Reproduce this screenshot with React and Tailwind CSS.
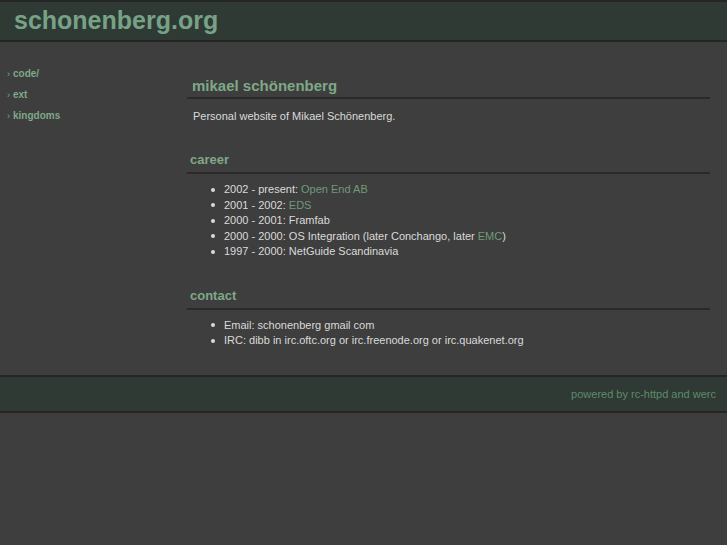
export default function App() {
  const font = { fontFamily: '"Liberation Sans", Arial, sans-serif' };
  return (
    <div className="min-h-screen bg-[#3e3e3e]" style={font}>
      <header className="h-[42px] border-y-2 border-[#252525] bg-[#2e3a33] pl-[14px] flex items-center">
        <span className="text-[25px] font-bold leading-none text-[#77a287] -mt-[2px]">schonenberg.org</span>
      </header>
      <div className="flex h-[333px]">
        <nav className="w-[187px] shrink-0 pt-[21px] pl-[7px]">
          {["code/", "ext", "kingdoms"].map((t) => (
            <div key={t} className="h-[21px] leading-[21px] text-[10px] font-bold text-[#7ea887]">
              <span className="text-[9px] font-normal mr-[3px] text-[#7ea887]">›</span>
              {t}
            </div>
          ))}
        </nav>
        <main className="flex-1 pr-[17px] pt-[35px] text-[11px] text-[#dadada]">
          <h1 className="pl-[5px] text-[15px] font-bold leading-[18px] text-[#7ea887] pb-[2px] border-b-2 border-[#2a2a2a]">
            mikael schönenberg
          </h1>
          <p className="pl-[6px] mt-[10px] leading-[15px]">Personal website of Mikael Schönenberg.</p>
          <h2 className="mt-[28px] pl-[3px] text-[13px] font-bold leading-[16px] text-[#7ea887] pb-[4px] border-b-2 border-[#2a2a2a]">
            career
          </h2>
          <ul className="mt-[8px] pl-[37px] leading-[15.5px]">
            {[
              ["2002 - present: ", <a key="a" className="text-[#6f9b78]">Open End AB</a>],
              ["2001 - 2002: ", <a key="a" className="text-[#6f9b78]">EDS</a>],
              ["2000 - 2001: Framfab"],
              ["2000 - 2000: OS Integration (later Conchango, later ", <a key="a" className="text-[#6f9b78]">EMC</a>, ")"],
              ["1997 - 2000: NetGuide Scandinavia"],
            ].map((parts, i) => (
              <li key={i} className="flex items-center">
                <span className="w-[4px] h-[4px] rounded-full bg-[#dadada] mr-[9px] -ml-[13px]"></span>
                <span>{parts}</span>
              </li>
            ))}
          </ul>
          <h2 className="mt-[28px] pl-[3px] text-[13px] font-bold leading-[16px] text-[#7ea887] pb-[4px] border-b-2 border-[#2a2a2a]">
            contact
          </h2>
          <ul className="mt-[8px] pl-[37px] leading-[15.5px]">
            {["Email: schonenberg gmail com", "IRC: dibb in irc.oftc.org or irc.freenode.org or irc.quakenet.org"].map((t) => (
              <li key={t} className="flex items-center">
                <span className="w-[4px] h-[4px] rounded-full bg-[#dadada] mr-[9px] -ml-[13px]"></span>
                <span>{t}</span>
              </li>
            ))}
          </ul>
        </main>
      </div>
      <footer className="h-[38px] border-y-2 border-[#252525] bg-[#2e3a33] flex items-center justify-end pr-[11px]">
        <span className="text-[11px] text-[#5e8a6b]">powered by rc-httpd and werc</span>
      </footer>
    </div>
  );
}
